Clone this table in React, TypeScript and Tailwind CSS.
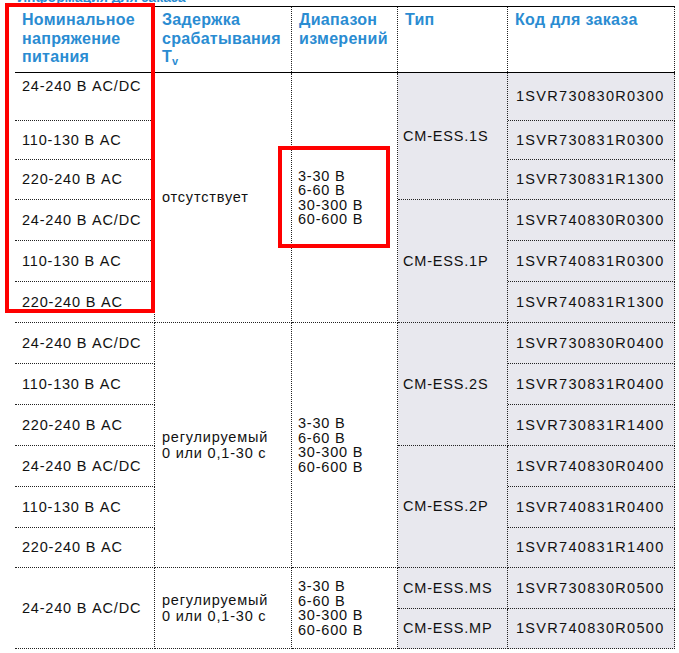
const cols = "grid grid-cols-[140px_137px_106px_110px_167px]";
const line = "border-dotted border-[#222]";

type BodyCell = {
  pos: string;
  text: React.ReactNode;
  extra?: string;
};

const ranges = (
  <span className="block leading-[14.5px]">
    3-30 В
    <br />
    6-60 В
    <br />
    30-300 В
    <br />
    60-600 В
  </span>
);

const adjustable = (
  <span className="block leading-[16px]">
    регулируемый
    <br />0 или 0,1-30 с
  </span>
);

const voltages = [
  "24-240 В AC/DC",
  "110-130 В AC",
  "220-240 В AC",
  "24-240 В AC/DC",
  "110-130 В AC",
  "220-240 В AC",
];

const codes = [
  "1SVR730830R0300",
  "1SVR730831R0300",
  "1SVR730831R1300",
  "1SVR740830R0300",
  "1SVR740831R0300",
  "1SVR740831R1300",
  "1SVR730830R0400",
  "1SVR730831R0400",
  "1SVR730831R1400",
  "1SVR740830R0400",
  "1SVR740831R0400",
  "1SVR740831R1400",
  "1SVR730830R0500",
  "1SVR740830R0500",
];

const col1Pos = [
  "col-start-1 row-start-1",
  "col-start-1 row-start-2",
  "col-start-1 row-start-3",
  "col-start-1 row-start-4",
  "col-start-1 row-start-5",
  "col-start-1 row-start-6",
  "col-start-1 row-start-7",
  "col-start-1 row-start-8",
  "col-start-1 row-start-9",
  "col-start-1 row-start-10",
  "col-start-1 row-start-11",
  "col-start-1 row-start-12",
];

const col5Pos = [
  "col-start-5 row-start-1",
  "col-start-5 row-start-2",
  "col-start-5 row-start-3",
  "col-start-5 row-start-4",
  "col-start-5 row-start-5",
  "col-start-5 row-start-6",
  "col-start-5 row-start-7",
  "col-start-5 row-start-8",
  "col-start-5 row-start-9",
  "col-start-5 row-start-10",
  "col-start-5 row-start-11",
  "col-start-5 row-start-12",
  "col-start-5 row-start-13",
  "col-start-5 row-start-14",
];

const grey = "bg-[#e8e8ee] pl-[5px]";

const cells: BodyCell[] = [
  ...col1Pos.map((pos, i) => ({
    pos,
    text: voltages[i % 6],
    extra: i === 0 ? "items-start pt-[5px]" : "",
  })),
  { pos: "col-start-1 row-start-13 row-span-2", text: "24-240 В AC/DC" },
  { pos: "col-start-2 row-start-1 row-span-6", text: "отсутствует" },
  { pos: "col-start-2 row-start-7 row-span-6", text: adjustable },
  { pos: "col-start-2 row-start-13 row-span-2", text: adjustable },
  { pos: "col-start-3 row-start-1 row-span-6", text: ranges, extra: "pl-[6px]" },
  { pos: "col-start-3 row-start-7 row-span-6", text: ranges, extra: "pl-[6px]" },
  { pos: "col-start-3 row-start-13 row-span-2", text: ranges, extra: "pl-[6px]" },
  { pos: "col-start-4 row-start-1 row-span-3", text: "CM-ESS.1S", extra: grey },
  { pos: "col-start-4 row-start-4 row-span-3", text: "CM-ESS.1P", extra: grey },
  { pos: "col-start-4 row-start-7 row-span-3", text: "CM-ESS.2S", extra: grey },
  { pos: "col-start-4 row-start-10 row-span-3", text: "CM-ESS.2P", extra: grey },
  { pos: "col-start-4 row-start-13", text: "CM-ESS.MS", extra: grey },
  { pos: "col-start-4 row-start-14", text: "CM-ESS.MP", extra: grey },
  ...col5Pos.map((pos, i) => ({
    pos,
    text: codes[i],
    extra: "bg-[#e8e8ee] pl-[8px] tracking-[1.3px]",
  })),
];

function HeaderCell({ children, className = "" }: { children: React.ReactNode; className?: string }) {
  return (
    <div
      className={`border-r ${line} px-[7px] pt-[4px] text-[16px] font-bold leading-[18.5px] tracking-[0.3px] text-[#2a8cd2] ${className}`}
    >
      {children}
    </div>
  );
}

export default function App() {
  return (
    <div className="relative h-[653px] w-[679px] overflow-hidden bg-white font-['Liberation_Sans',Arial,sans-serif] text-[#111]">
      <div className="h-[6px] overflow-hidden pl-[17px]">
        <div className="mt-[-10px] text-[14px] font-bold leading-[14px] text-[#2a8cd2]">
          Информация для заказа
        </div>
      </div>

      <div className="ml-[15px] w-[660px]">
        <div className={`${cols} h-[67px] border-y border-black`}>
          <HeaderCell>
            Номинальное
            <br />
            напряжение
            <br />
            питания
          </HeaderCell>
          <HeaderCell>
            Задержка
            <br />
            срабатывания
            <br />T<sub className="text-[11px]">v</sub>
          </HeaderCell>
          <HeaderCell className="px-[6px]">
            Диапазон
            <br />
            измерений
          </HeaderCell>
          <HeaderCell className="px-[6px]">Тип</HeaderCell>
          <HeaderCell>Код для заказа</HeaderCell>
        </div>

        <div
          className={`${cols} grid-rows-[48px_39px_40px_41px_41px_41px_41px_41px_41px_41px_41px_40px_41px_40px] text-[14.5px] tracking-[0.8px]`}
        >
          {cells.map((c, i) => (
            <div
              key={i}
              className={`flex items-center border-b border-r ${line} px-[7px] leading-[17px] ${c.pos} ${c.extra ?? ""}`}
            >
              {c.text}
            </div>
          ))}
        </div>
      </div>

      <div className="absolute left-[5px] top-[3px] h-[310px] w-[150px] border-4 border-[#ff0000]" />
      <div className="absolute left-[278px] top-[146px] h-[102px] w-[112px] border-4 border-[#ff0000]" />
    </div>
  );
}
